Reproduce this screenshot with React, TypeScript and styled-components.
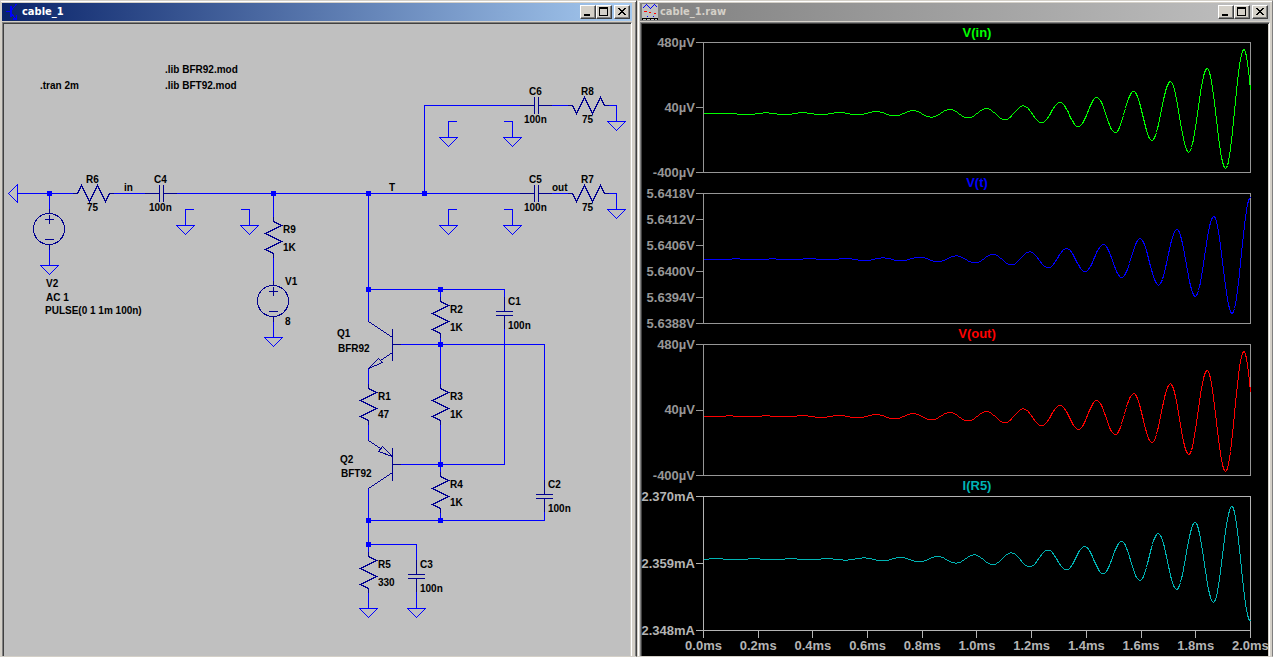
import React from "react";
import styled, { createGlobalStyle } from "styled-components";

const GlobalStyle = createGlobalStyle`
  * { box-sizing: border-box; }
  body { margin: 0; background: #d4d0c8; }
`;

const Desktop = styled.main`
  display: grid;
  grid-template-columns: 637fr 636fr;
  min-height: 100vh;
  background: #d4d0c8;
`;

const WindowFrame = styled.section<{ $side: "left" | "right" }>`
  display: flex;
  flex-direction: column;
  min-width: 0;
  padding: ${(p) => (p.$side === "left" ? "2px 4px 0 1px" : "2px 2px 0 2px")};
  border: 1px solid #d4d0c8;
  border-right-color: ${(p) => (p.$side === "left" ? "#404040" : "#808080")};
  box-shadow: ${(p) =>
    p.$side === "left" ? "inset 0 1px #fff, inset -1px 0 #808080" : "inset 1px 1px #fff"};
`;

const TitleBar = styled.header<{ $active: boolean }>`
  display: flex;
  align-items: center;
  gap: 2px;
  height: 18px;
  padding: 0 2px;
  color: ${(p) => (p.$active ? "#fff" : "#d4d0c8")};
  background: ${(p) =>
    p.$active
      ? "linear-gradient(90deg, #0a246a, #a6caf0)"
      : "linear-gradient(90deg, #808080, #c0c0c0)"};
`;

const Title = styled.h1`
  flex: 1;
  margin: 0;
  font: bold 11px/18px "DejaVu Sans Condensed", "Open Sans", sans-serif;
`;

const Controls = styled.div`
  display: flex;
`;

const ControlButton = styled.button<{ $spaced?: boolean }>`
  display: block;
  width: 16px;
  height: 14px;
  margin: 0 0 0 ${(p) => (p.$spaced ? "2px" : "0")};
  padding: 0;
  border: 1px solid;
  border-color: #fff #404040 #404040 #fff;
  background: #d4d0c8;
  box-shadow: inset -1px -1px #808080;
  svg { display: block; }
`;

const ClientArea = styled.div<{ $dark?: boolean }>`
  flex: 1;
  display: flex;
  flex-direction: column;
  min-width: 0;
  margin-top: 1px;
  overflow: hidden;
  border: 1px solid;
  border-color: #808080 #fff #d4d0c8 #808080;
  border-bottom-width: 0;
  box-shadow: inset 1px 1px #404040, inset -1px 0 #d4d0c8;
  padding: 1px 1px 0 1px;
  background: ${(p) => (p.$dark ? "#000" : "#c0c0c0")};
`;

function WindowControls() {
  return (
    <Controls>
      <ControlButton type="button" aria-label="Minimize">
        <svg width="14" height="12" shapeRendering="crispEdges">
          <rect x="3" y="8" width="6" height="2" />
        </svg>
      </ControlButton>
      <ControlButton type="button" aria-label="Maximize">
        <svg width="14" height="12" shapeRendering="crispEdges">
          <path d="M2 1h9v9h-9z M3 3v6h7v-6z" fillRule="evenodd" />
        </svg>
      </ControlButton>
      <ControlButton type="button" aria-label="Close" $spaced>
        <svg width="14" height="12" shapeRendering="crispEdges">
          <path d="M3 2h2v1h1v1h2v-1h1v-1h2v1h-1v1h-1v1h-1v1h1v1h1v1h1v1h-2v-1h-1v-1h-2v1h-1v1h-2v-1h1v-1h1v-1h1v-1h-1v-1h-1v-1h-1z" />
        </svg>
      </ControlButton>
    </Controls>
  );
}

function TransistorIcon() {
  return (
    <svg width="16" height="16" shapeRendering="crispEdges" fill="none" stroke="#00f" aria-hidden="true">
      <path d="M2 7.5H6 M8 5.5L12.5 0 M8 10.5L12 15" />
      <path d="M7 2V13" strokeWidth="2" />
      <path d="M9 14h3v-3h1v5h-4z" fill="#00f" stroke="none" />
    </svg>
  );
}

function WaveIcon() {
  return (
    <svg width="16" height="16" shapeRendering="crispEdges" fill="none" aria-hidden="true">
      <rect width="16" height="16" fill="#c0c0c0" />
      <path d="M0.5 4.5L4.5 0.5L8.5 4.5L12.5 0.5L15.5 3.5" stroke="#00f" />
      <path d="M2 7.5h3M7 8.5h2M12 9.5h2" stroke="#f00" />
      <path d="M5 12.5h1M11 12.5h1" stroke="#00f" />
      <path d="M0 14.5h16M0.5 15v1M4.5 15v1M8.5 15v1M12.5 15v1M15.5 15v1" stroke="#000" />
    </svg>
  );
}

/* ---------- Schematic ---------- */

const Drawing = styled.svg`
  display: block;
  flex: none;
  .wire { stroke: #00f; }
  .part { stroke: #000090; }
  .node { fill: #00f; }
  text { font: bold 10px "Liberation Sans", Arial, sans-serif; fill: #000; }
`;

type At = { x: number; y: number };

const Ground = ({ x, y }: At) => <path className="wire" d={`M${x - 9} ${y}H${x + 9}L${x} ${y + 9}Z`} />;

const ResistorV = ({ x, y }: At) => (
  <path className="part" d={`M${x} ${y - 4}v4l8 4l-16 8l16 8l-16 8l8 4v4`} />
);

const ResistorH = ({ x, y, up }: At & { up?: boolean }) => {
  const s = up ? -1 : 1;
  return (
    <path
      className="part"
      d={`M${x - 4} ${y}h4l4 ${8 * s}l8 ${-16 * s}l8 ${16 * s}l8 ${-16 * s}l4 ${8 * s}h4`}
    />
  );
};

const CapV = ({ x, y }: At) => (
  <path className="part" d={`M${x} ${y - 14}v14M${x - 8} ${y}h16M${x - 8} ${y + 4}h16M${x} ${y + 4}v13`} />
);

const CapH = ({ x, y }: At) => (
  <path className="part" d={`M${x - 14} ${y}h14M${x} ${y - 8}v16M${x + 4} ${y - 8}v16M${x + 4} ${y}h13`} />
);

const Source = ({ x, y }: At) => (
  <g className="part">
    <circle cx={x - 0.5} cy={y - 0.5} r="15.5" />
    <path
      d={`M${x} ${y - 20}v4M${x} ${y + 16}v4M${x - 4} ${y - 10}h8M${x} ${y - 14}v8M${x - 4} ${y + 10}h8`}
    />
  </g>
);

const Stub = ({ x, y, right }: At & { right?: boolean }) => (
  <>
    <path className="wire" d={`M${right ? x - 8 : x + 8} ${y - 16}H${x}V${y}`} />
    <Ground x={x} y={y} />
  </>
);

const WIRES = [
  "M17 184V202L8 193Z",
  "M17 193H73M113 193H145M176 193H520M552 193H568M608 193H616V209",
  "M49 193V209M49 249V265",
  "M273 193V217M273 257V281M273 321V337",
  "M424 193V105H520M552 105H568M608 105H616V121",
  "M368 193V321M368 289H504V297M440 289V297",
  "M504 328V464H400",
  "M400 344H544V480M544 511V520H368",
  "M440 337V384M440 424V472M440 512V520",
  "M368 368V384M368 424V440M368 488V552",
  "M368 592V608M368 544H416V560M416 591V608",
];

const NODES = [
  [49, 193], [273, 193], [368, 193], [424, 193], [368, 289], [440, 289],
  [440, 344], [440, 464], [368, 520], [440, 520], [368, 544],
];

const LABELS: [number, number, string][] = [
  [165, 73, ".lib BFR92.mod"], [165, 89, ".lib BFT92.mod"], [40, 89, ".tran 2m"],
  [86, 183, "R6"], [87, 211, "75"], [124, 191, "in"], [154, 183, "C4"], [149, 211, "100n"],
  [283, 233, "R9"], [283, 251, "1K"], [285, 285, "V1"], [285, 325, "8"],
  [46, 287, "V2"], [46, 301, "AC 1"], [45, 314, "PULSE(0 1 1m 100n)"],
  [529, 95, "C6"], [524, 123, "100n"], [581, 95, "R8"], [582, 123, "75"],
  [529, 183, "C5"], [524, 211, "100n"], [552, 191, "out"], [581, 183, "R7"], [582, 211, "75"],
  [389, 191, "T"], [508, 305, "C1"], [508, 329, "100n"], [450, 313, "R2"], [450, 331, "1K"],
  [337, 337, "Q1"], [338, 352, "BFR92"], [378, 400, "R1"], [378, 418, "47"],
  [450, 400, "R3"], [450, 418, "1K"], [340, 463, "Q2"], [341, 477, "BFT92"],
  [450, 488, "R4"], [450, 506, "1K"], [548, 488, "C2"], [548, 512, "100n"],
  [378, 568, "R5"], [378, 586, "330"], [420, 568, "C3"], [420, 592, "100n"],
];

function Schematic() {
  return (
    <Drawing width="627" height="608" viewBox="4 24 627 608" role="img" aria-label="Amplifier schematic">
      <g fill="none" shapeRendering="crispEdges" strokeLinecap="square" transform="translate(0.5 0.5)">
        {WIRES.map((d) => (
          <path key={d} className="wire" d={d} />
        ))}
        <Stub x={185} y={225} />
        <Stub x={249} y={225} right />
        <Stub x={448} y={137} />
        <Stub x={512} y={137} right />
        <Stub x={448} y={225} />
        <Stub x={512} y={225} right />
        <Ground x={49} y={265} />
        <Ground x={273} y={337} />
        <Ground x={616} y={121} />
        <Ground x={616} y={209} />
        <Ground x={368} y={608} />
        <Ground x={416} y={608} />
        <ResistorH x={77} y={193} up />
        <ResistorH x={572} y={105} />
        <ResistorH x={572} y={193} />
        <ResistorV x={273} y={221} />
        <ResistorV x={440} y={301} />
        <ResistorV x={440} y={388} />
        <ResistorV x={440} y={476} />
        <ResistorV x={368} y={388} />
        <ResistorV x={368} y={556} />
        <CapH x={159} y={193} />
        <CapH x={534} y={105} />
        <CapH x={534} y={193} />
        <CapV x={504} y={311} />
        <CapV x={544} y={494} />
        <CapV x={416} y={574} />
        <Source x={49} y={229} />
        <Source x={273} y={301} />
        <path className="part" d="M368 321L392 337M392 329V360M392 344H400M392 352L380 360M368 368L378 358L382 362Z" />
        <path className="part" d="M368 440L380 448M392 456L382 446L378 451ZM392 448V480M392 464H400M392 472L368 488" />
      </g>
      {NODES.map(([x, y]) => (
        <rect key={`${x}-${y}`} className="node" x={x - 2} y={y - 2} width="5" height="5" />
      ))}
      {LABELS.map(([x, y, label]) => (
        <text key={`${x}-${y}`} x={x} y={y}>
          {label}
        </text>
      ))}
    </Drawing>
  );
}

/* ---------- Waveforms ---------- */

const PLOT_WIDTH = 548;
const HALF_PERIOD = 18.38;

type Trace = {
  name: string;
  color: string;
  grid: string;
  height: number;
  ticks: string[];
  /* x of the newest extremum; levels run from newest to oldest */
  lastX: number;
  levels: number[];
};

const TRACES: Trace[] = [
  {
    name: "V(in)", color: "#00ff00", grid: "#969696", height: 131,
    ticks: ["480µV", "40µV", "-400µV"], lastX: 558.8,
    levels: [150, 7, 126, 26, 109.6, 39, 98, 49, 90, 55, 84.3, 60, 80.4, 63.4, 77.4, 66, 75.4, 67, 74.6, 68.2, 73.4, 69, 72.4, 70, 72.2, 70.2, 72.2, 70.4, 72, 71.2, 71.4, 71.2],
  },
  {
    name: "V(t)", color: "#0000ff", grid: "#969696", height: 131,
    ticks: ["5.6418V", "5.6412V", "5.6406V", "5.6400V", "5.6394V", "5.6388V"], lastX: 547,
    levels: [4, 120, 23, 103, 36, 91.6, 45, 84, 51, 78, 55, 74.4, 58.4, 71.4, 61, 69.4, 62.4, 68.2, 63.6, 67.4, 64.4, 67.2, 65, 66.4, 65.2, 66.4, 65.4, 66.4, 65.4, 66.4, 65.6],
  },
  {
    name: "V(out)", color: "#ff0000", grid: "#969696", height: 132,
    ticks: ["480µV", "40µV", "-400µV"], lastX: 558.8,
    levels: [150, 7, 127, 26, 110, 39.4, 98.2, 49.2, 90.2, 56, 85, 61, 81.4, 64.4, 78.4, 67, 76.4, 68, 75.4, 69.2, 74.4, 70, 73.4, 71, 73, 71.2, 72.4, 71.4, 72.4, 71.4, 72.4, 71.8],
  },
  {
    name: "I(R5)", color: "#00b4b4", grid: "#b4b4b4", height: 135,
    ticks: ["2.370mA", "2.359mA", "2.348mA"], lastX: 546.7,
    levels: [124.4, 10, 106, 26, 93, 37, 84, 45, 77.4, 50, 73.4, 53.6, 70.4, 56.4, 68.2, 58.4, 66.6, 60, 65.4, 61, 64.4, 61.4, 63.6, 62.2, 63.4, 62.2, 63.4, 62.2, 63.4, 62.2, 63],
  },
];

const TIMES = ["0.0ms", "0.2ms", "0.4ms", "0.6ms", "0.8ms", "1.0ms", "1.2ms", "1.4ms", "1.6ms", "1.8ms", "2.0ms"];

function tracePath({ lastX, levels }: Trace) {
  const points: string[] = [];
  for (let x = 0; x < PLOT_WIDTH; x++) {
    const back = Math.max(0, (lastX - x) / HALF_PERIOD);
    const i = Math.min(Math.floor(back), levels.length - 2);
    const t = Math.min(1, back - i);
    const w = (1 - Math.cos(Math.PI * t)) / 2;
    const y = levels[i] + (levels[i + 1] - levels[i]) * w;
    points.push(`${x + 0.5} ${Math.round(y) + 0.5}`);
  }
  return "M" + points.join("L");
}

const Waveforms = styled.div`
  flex: 1;
  display: flex;
  flex-direction: column;
  padding: 0 17px 0 0;
  font: bold 13px/16px "Liberation Sans", Arial, sans-serif;
`;

const TraceName = styled.h2<{ $color: string; $first: boolean }>`
  margin: 0 0 0 61px;
  font: inherit;
  line-height: ${(p) => (p.$first ? 18 : 20)}px;
  text-align: center;
  color: ${(p) => p.$color};
`;

const PlotRow = styled.div<{ $weight: number }>`
  flex: ${(p) => p.$weight} 1 0;
  display: flex;
  min-height: 80px;
`;

const YAxis = styled.div<{ $color: string }>`
  flex: none;
  display: flex;
  flex-direction: column;
  justify-content: space-between;
  width: 61px;
  color: ${(p) => p.$color};
`;

const YTick = styled.div`
  display: flex;
  align-items: center;
  justify-content: flex-end;
  gap: 1px;
  height: 1px;
  white-space: nowrap;
  &::after {
    content: "";
    flex: none;
    width: 7px;
    height: 1px;
    background: currentColor;
  }
`;

const PlotArea = styled.div<{ $color: string }>`
  flex: 1;
  display: grid;
  min-width: 0;
  box-shadow: inset 0 0 0 1px ${(p) => p.$color};
  svg {
    display: block;
    width: 100%;
    height: 100%;
    min-height: 0;
  }
`;

const XAxis = styled.div`
  display: flex;
  justify-content: space-between;
  height: 25px;
  margin-left: 61px;
  color: #b4b4b4;
`;

const XTick = styled.div`
  display: flex;
  flex-direction: column;
  align-items: center;
  width: 1px;
  white-space: nowrap;
  &::before {
    content: "";
    flex: none;
    width: 1px;
    height: 7px;
    background: currentColor;
  }
`;

export default function App() {
  return (
    <>
      <GlobalStyle />
      <Desktop>
        <WindowFrame $side="left">
          <TitleBar $active>
            <TransistorIcon />
            <Title>cable_1</Title>
            <WindowControls />
          </TitleBar>
          <ClientArea>
            <Schematic />
          </ClientArea>
        </WindowFrame>
        <WindowFrame $side="right">
          <TitleBar $active={false}>
            <WaveIcon />
            <Title>cable_1.raw</Title>
            <WindowControls />
          </TitleBar>
          <ClientArea $dark>
            <Waveforms>
              {TRACES.map((trace, index) => (
                <React.Fragment key={trace.name}>
                  <TraceName $color={trace.color} $first={index === 0}>
                    {trace.name}
                  </TraceName>
                  <PlotRow $weight={trace.height}>
                    <YAxis $color={trace.grid}>
                      {trace.ticks.map((tick) => (
                        <YTick key={tick}>{tick}</YTick>
                      ))}
                    </YAxis>
                    <PlotArea $color={trace.grid}>
                      <svg
                        viewBox={`0 0 ${PLOT_WIDTH} ${trace.height}`}
                        preserveAspectRatio="none"
                        role="img"
                        aria-label={`${trace.name} waveform`}
                      >
                        <path
                          d={tracePath(trace)}
                          fill="none"
                          stroke={trace.color}
                          shapeRendering="crispEdges"
                          vectorEffect="non-scaling-stroke"
                        />
                      </svg>
                    </PlotArea>
                  </PlotRow>
                </React.Fragment>
              ))}
              <XAxis>
                {TIMES.map((time) => (
                  <XTick key={time}>{time}</XTick>
                ))}
              </XAxis>
            </Waveforms>
          </ClientArea>
        </WindowFrame>
      </Desktop>
    </>
  );
}
